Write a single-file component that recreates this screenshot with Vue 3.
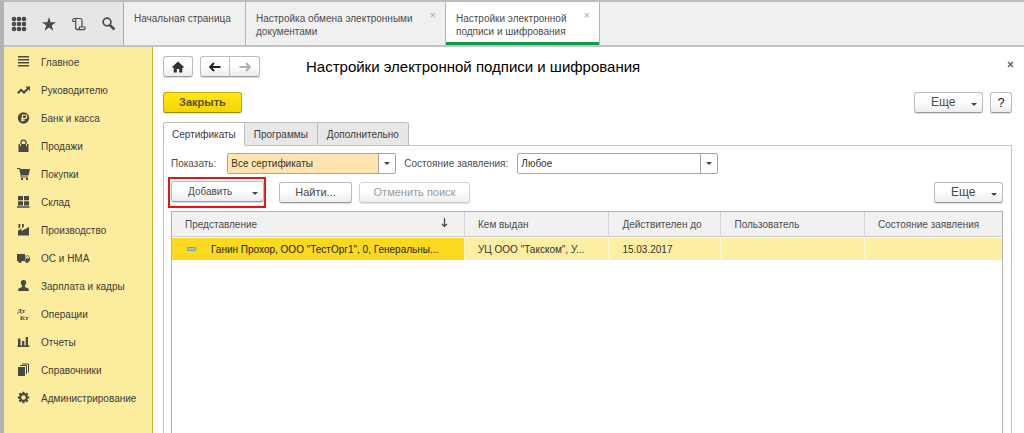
<script setup>
import { ref } from 'vue'

const sections = [
  { name: 'Главное', icon: 'menu' },
  { name: 'Руководителю', icon: 'trend' },
  { name: 'Банк и касса', icon: 'ruble' },
  { name: 'Продажи', icon: 'bag' },
  { name: 'Покупки', icon: 'cart' },
  { name: 'Склад', icon: 'store' },
  { name: 'Производство', icon: 'factory' },
  { name: 'ОС и НМА', icon: 'truck' },
  { name: 'Зарплата и кадры', icon: 'person' },
  { name: 'Операции', icon: 'dtkt' },
  { name: 'Отчеты', icon: 'chart' },
  { name: 'Справочники', icon: 'books' },
  { name: 'Администрирование', icon: 'gear' },
]
const tabs = ['Сертификаты', 'Программы', 'Дополнительно']
const activeTab = ref('Сертификаты')
const show = ref('Все сертификаты')
const state = ref('Любое')
</script>

<template>
  <div class="window">
    <header class="topbar">
      <div class="tools">
        <button type="button" aria-label="Меню функций">
          <svg width="16" height="16" viewBox="0 0 16 16">
            <template v-for="y in 3" :key="y">
              <circle v-for="x in 3" :key="x" :cx="x * 5 - 2" :cy="y * 5 - 2" r="2.3" />
            </template>
          </svg>
        </button>
        <button type="button" aria-label="Избранное">
          <svg width="16" height="16" viewBox="0 0 16 16"><path d="M8 1l1.700 5.200h5.300l-4.300 3.200 1.700 5.300L8 11.500l-4.400 3.200 1.700-5.300L1 6.200h5.300z" /></svg>
        </button>
        <button type="button" aria-label="История">
          <svg class="line" width="16" height="16" viewBox="0 0 16 16"><path d="M4 5.500H2.200C1.300 4.500 1.700 2.500 3.200 2.500H9.500C10.600 2.500 11 3.500 11 4.500V11M4.700 3V11.500C4.700 13 5.500 13.700 6.500 13.700H12.500C14 13.700 14.300 12 13.800 11H8.500C8.500 12.500 8 13.500 6.500 13.700" /></svg>
        </button>
        <button type="button" aria-label="Поиск">
          <svg class="line" width="16" height="16" viewBox="0 0 16 16"><circle cx="6" cy="6" r="3.900" stroke-width="1.700" /><path d="M8.800 9l4.700 4.500" stroke-width="2.500" /></svg>
        </button>
      </div>
      <nav class="pages">
        <div class="page home"><a href="#">Начальная страница</a></div>
        <div class="page exchange">
          <a href="#">Настройка обмена электронными документами</a>
          <button type="button" aria-label="Закрыть вкладку">×</button>
        </div>
        <div class="page current">
          <a href="#" aria-current="page">Настройки электронной подписи и шифрования</a>
          <button type="button" aria-label="Закрыть вкладку">×</button>
        </div>
      </nav>
    </header>

    <div class="body">
      <nav class="sidebar">
        <a v-for="s in sections" :key="s.name" href="#">
          <svg width="14" height="14" viewBox="0 0 14 14" aria-hidden="true">
            <path v-if="s.icon === 'menu'" d="M1 1h11v1.500H1zM1 4h11v1.500H1zM1 7h11v1.500H1zM1 10h11v1.500H1z" />
            <path v-else-if="s.icon === 'trend'" d="M0 9.500L4 5.500l3 2.500 3-3L8.500 3.500H13V8l-1.500-1.500L7 11 4.200 8.300 1.500 11z" />
            <g v-else-if="s.icon === 'ruble'">
              <circle cx="6.500" cy="7" r="5.700" />
              <path class="cut" d="M5.500 10.500V4H8a1.600 1.600 0 010 3.500H4M4 9.200h3.700" />
            </g>
            <g v-else-if="s.icon === 'bag'">
              <path d="M1.500 5h10v8h-10z" />
              <path class="stroke" d="M4 6V3.300C4 .3 9 .3 9 3.300V6" />
              <path class="cut thin" d="M3.500 5v2M9.500 5v2" />
            </g>
            <path v-else-if="s.icon === 'cart'" d="M0 1h3l.4 1H13l-1.500 6.500H4.500l.3 1H11v1H4L2.300 2H0zM4 11h2v2H4zM9 11h2v2H9z" />
            <path v-else-if="s.icon === 'store'" d="M1 1h5v4.200H1zM7 1h5v4.200H7zM1 6.200h5v4.200H1zM7 6.200h5v4.200H7zM0 11.300h12.500v1.400H0z" />
            <path v-else-if="s.icon === 'factory'" d="M1 12.500V7.500L4.500 5.500V8L12 4v8.500zM1.500 1h1.800v3.500L1.500 5.500zM5 1h1.800v3L5 5z" />
            <g v-else-if="s.icon === 'truck'">
              <path d="M0 3h8v7H0zM8.500 4.500h3L13 7v3H8.500z" />
              <circle cx="3" cy="10.300" r="1.700" /><circle cx="10" cy="10.300" r="1.700" />
              <path class="cut thin" d="M9.500 5.500H11l1 1.500H9.500z" />
            </g>
            <path v-else-if="s.icon === 'person'" d="M6.500 1C9 1 9.500 3 9 4.500 8.700 6 8 6.500 7.800 7v1L11 9.300c.6.300.8 1 .8 2.700H1.200c0-1.700.2-2.400.8-2.700L5.200 8V7C5 6.500 4.300 6 4 4.500 3.500 3 4 1 6.500 1z" />
            <g v-else-if="s.icon === 'dtkt'" class="letters">
              <text x="0" y="6">Дт</text><text x="3" y="13">Кт</text>
            </g>
            <path v-else-if="s.icon === 'chart'" d="M1 3.500h2.500v7H1zM5 6h2.300v4.500H5zM8.700 2H11v8.500H8.700zM.5 10.500h12V12H.5z" />
            <g v-else-if="s.icon === 'books'">
              <path d="M1 4h7v9H1z" />
              <path class="stroke thin" d="M3 2.500h6.500V11M5 1h6.500v8.500" />
            </g>
            <g v-else>
              <circle class="cog" cx="6.500" cy="6.500" r="3.300" />
              <path class="teeth" d="M6.500 .7V3M6.500 10v2.300M.7 6.500H3M10 6.500h2.300M2.400 2.400L4 4M9 9l1.600 1.600M10.600 2.400L9 4M4 9l-1.600 1.600" />
            </g>
          </svg>
          <span>{{ s.name }}</span>
        </a>
      </nav>

      <main class="content">
        <div class="heading">
          <button class="btn small" type="button" aria-label="Домой">
            <svg width="14" height="12" viewBox="0 0 14 12"><path fill="#333" d="M7 .5L13 6l-1 1-.7-.6V11.500H8.200V8H5.800v3.500H2.700V6.400L2 7 1 6z" /></svg>
          </button>
          <div class="history">
            <button class="btn" type="button" aria-label="Назад">
              <svg width="12" height="10" viewBox="0 0 12 10"><path d="M11.500 5H1.500M5 1L1.200 5 5 9" fill="none" stroke="#222" stroke-width="2" /></svg>
            </button>
            <button class="btn" type="button" aria-label="Вперед">
              <svg width="12" height="10" viewBox="0 0 12 10"><path d="M.5 5h10M7 1l3.800 4L7 9" fill="none" stroke="#b0b0b0" stroke-width="2" /></svg>
            </button>
          </div>
          <h1>Настройки электронной подписи и шифрования</h1>
          <button class="close" type="button" aria-label="Закрыть окно">
            <svg width="7" height="7" viewBox="0 0 7 7"><path d="M1 1l5 5M6 1L1 6" stroke="#666" stroke-width="1.500" /></svg>
          </button>
        </div>

        <div class="commands">
          <button class="btn primary" type="button">Закрыть</button>
          <span class="spacer"></span>
          <button class="btn more" type="button"><span>Еще</span><i class="arrow"></i></button>
          <button class="btn help" type="button">?</button>
        </div>

        <div class="tabs" role="tablist">
          <button v-for="t in tabs" :key="t" type="button" role="tab" :aria-selected="t === activeTab" :class="{ active: t === activeTab }" @click="activeTab = t">{{ t }}</button>
        </div>

        <section class="panel">
          <div class="filters">
            <label for="show">Показать:</label>
            <div class="combo warm">
              <select id="show" v-model="show"><option>Все сертификаты</option></select>
              <i class="arrow"></i>
            </div>
            <label for="state">Состояние заявления:</label>
            <div class="combo wide">
              <select id="state" v-model="state"><option>Любое</option></select>
              <i class="arrow"></i>
            </div>
          </div>

          <div class="actions">
            <div class="marked">
              <button class="btn add" type="button"><span>Добавить</span><i class="arrow"></i></button>
            </div>
            <button class="btn find" type="button">Найти...</button>
            <button class="btn cancel" type="button" disabled>Отменить поиск</button>
            <span class="spacer"></span>
            <button class="btn more" type="button"><span>Еще</span><i class="arrow"></i></button>
          </div>

          <div class="grid">
            <table>
              <colgroup>
                <col class="c1" /><col class="c2" /><col class="c3" /><col class="c4" /><col class="c5" />
              </colgroup>
              <thead>
                <tr>
                  <th><div class="sorted"><span>Представление</span>
                    <svg width="7" height="10" viewBox="0 0 7 10"><path d="M3.500 0v8M1 6l2.500 2.500L6 6" fill="none" stroke="#444" stroke-width="1.200" /></svg>
                  </div></th>
                  <th>Кем выдан</th>
                  <th>Действителен до</th>
                  <th>Пользователь</th>
                  <th>Состояние заявления</th>
                </tr>
              </thead>
              <tbody>
                <tr>
                  <td class="selected"><i class="mark"></i>Ганин Прохор, ООО "ТестОрг1", 0, Генеральны...</td>
                  <td>УЦ ООО "Такском", У...</td>
                  <td>15.03.2017</td>
                  <td></td>
                  <td></td>
                </tr>
              </tbody>
            </table>
          </div>
        </section>
      </main>
    </div>
  </div>
</template>

<style>
body { margin: 0; }
</style>

<style scoped>
* { box-sizing: border-box; }
.window {
  display: flex;
  flex-direction: column;
  min-height: 100vh;
  border-top: 2px solid #bdbdbd;
  border-left: 4px solid #b3b1b3;
  background: #fff;
  color: #3c3c3c;
  font: 10px/13px "Liberation Sans", Arial, sans-serif;
}
button, select { font: inherit; color: inherit; margin: 0; padding: 0; }
button { border: 0; background: none; }
a { color: inherit; text-decoration: none; }
svg { display: block; flex: none; }
h1 { margin: 0; }

.topbar { display: flex; height: 45px; background: #f0f0f0; border-bottom: 2px solid #c3c3c3; }
.tools { display: flex; align-items: center; gap: 14px; width: 120px; padding-left: 7px; background: #e6e6e6; border-right: 1px solid #aaa; }
.tools svg { fill: #4a4a4a; }
.tools svg.line { fill: none; stroke: #4a4a4a; stroke-width: 1.200; }
.pages { display: flex; }
.page { display: flex; justify-content: space-between; align-items: flex-start; padding: 10px 9px 0 10px; border-right: 1px solid #b5b5b5; color: #4c4c4c; }
.page button { font-size: 11px; line-height: 7px; color: #aaa; }
.home { width: 122px; white-space: nowrap; }
.exchange { width: 200px; }
.exchange a { width: 168px; }
.current { width: 154px; background: #fff; box-shadow: inset 0 -3px #0a9c48; }
.current a { width: 124px; }

.body { display: flex; flex: 1; }
.sidebar { width: 149px; flex: none; padding: 1px 0 16px; background: #fbec9e; border-right: 1px solid #c8b432; }
.sidebar a { display: flex; align-items: center; gap: 10px; height: 28px; padding-left: 13px; white-space: nowrap; }
.sidebar svg { fill: #4a4845; }
.sidebar .cut { fill: none; stroke: #fbec9e; stroke-width: 1.200; }
.sidebar .stroke, .sidebar .cog, .sidebar .teeth { fill: none; stroke: #4a4845; stroke-width: 1.300; }
.sidebar .thin { stroke-width: 1; }
.sidebar .cog, .sidebar .teeth { stroke-width: 2.200; }
.letters text { font: bold 7px "Liberation Serif", serif; }

.content { display: flex; flex-direction: column; flex: 1; min-width: 0; padding: 9px 12px 0 10px; }
.heading { display: flex; align-items: center; height: 21px; }
.btn {
  display: inline-flex;
  align-items: center;
  justify-content: center;
  height: 21px;
  border: 1px solid #bcbcbc;
  border-bottom-color: #999;
  border-radius: 3px;
  background: linear-gradient(#fff 40%, #ededed);
  box-shadow: 0 1px 1px #ddd;
  color: #4a4a4a;
  font-size: 11px;
}
.btn.small { width: 30px; }
.history { display: flex; margin-left: 7px; }
.history .btn { width: 30px; border-radius: 3px 0 0 3px; }
.history .btn + .btn { border-left: 0; border-radius: 0 3px 3px 0; }
.heading h1 { margin-left: 46px; color: #000; font-size: 15px; line-height: 20px; font-weight: 400; white-space: nowrap; }
.close { margin-left: auto; padding-bottom: 5px; margin-right: -2px; }
.commands { display: flex; align-items: center; margin-top: 15px; gap: 7px; }
.spacer { flex: 1; }
.btn.primary { width: 79px; border-color: #c4a800; border-bottom-color: #a08c10; background: linear-gradient(#ffe817, #f6d500); color: #5c4f1c; font-weight: 700; }
.btn.more, .btn.add { justify-content: space-between; padding: 0 5px 0 16px; }
.btn.more { width: 69px; font-size: 12px; }
.btn.help { width: 22px; font-size: 13px; color: #222; }
.arrow { flex: none; width: 0; height: 0; border: 3px solid transparent; border-top-color: #444; border-bottom: 0; }
.btn .arrow { margin-top: 3px; }

.tabs { display: flex; height: 24px; margin-top: 9px; }
.tabs button { padding: 0 9px; border: 1px solid #bcbcbc; border-left: 0; background: #e7e7e7; white-space: nowrap; }
.tabs button:first-child { padding: 0 8px; border-left: 1px solid #bcbcbc; border-radius: 3px 0 0 0; }
.tabs button:last-child { border-radius: 0 3px 0 0; }
.tabs .active { position: relative; z-index: 1; background: #fff; border-bottom-color: #fff; }
.panel { display: flex; flex-direction: column; flex: 1; margin-top: -1px; padding: 7px 8px 0 7px; border: 1px solid #c4c4c4; border-bottom: 0; }
.filters { display: flex; align-items: center; }
.filters label { color: #4c4c4c; white-space: nowrap; }
.combo { display: flex; align-items: center; width: 169px; height: 21px; margin: 0 8px 0 11px; border: 1px solid #a5a5a5; border-radius: 2px; overflow: hidden; background: #fff; }
.combo select { flex: 1; height: 19px; padding: 0 3px; border: 0; border-right: 1px solid #a5a5a5; border-radius: 0; outline: 0; appearance: none; background: transparent; color: #333; }
.combo .arrow { margin: 0 5px; }
.warm select { background: #ffe5b0; }
.wide { width: 201px; }
.filters .wide { margin-left: 9px; }

.actions { display: flex; align-items: center; margin-top: 3px; }
.marked { display: flex; margin-left: -3px; padding: 2px 0 4px 1px; border: 2px solid #ee1111; }
.btn.add { width: 93px; font-size: 10px; }
.btn.find { width: 73px; margin: 0 7px 0 13px; }
.btn.cancel { width: 111px; color: #999; border-color: #d0d0d0; }
.grid { flex: 1; margin-top: 3px; border: 1px solid #b0b0b0; border-bottom: 0; }
table { width: 100%; table-layout: fixed; border-collapse: separate; border-spacing: 0; }
.c1 { width: 35.300%; }
.c2 { width: 17.400%; }
.c3 { width: 13.500%; }
.c4 { width: 17.300%; }
.c5 { width: 16.500%; }
th, td { padding: 0 0 0 13px; text-align: left; white-space: nowrap; overflow: hidden; border-right: 1px solid #d5d5d5; }
th { height: 25px; background: #f1f1f1; border-bottom: 1px solid #ccc; color: #4c4c4c; font-weight: 400; }
td { height: 23px; background: #fceea2; border-top: 1px solid #fff; border-right-color: #fff8d6; color: #333; }
th:last-child, td:last-child { border-right: 0; }
.sorted { display: flex; justify-content: space-between; padding-right: 16px; }
.selected { padding-left: 15px; background: #fbd91f; color: #222; }
.mark { display: inline-block; width: 9px; height: 4px; margin-right: 15px; border: 1px solid #7f9a9c; border-radius: 1px; background: #a8c4c8; vertical-align: 2px; }
</style>
